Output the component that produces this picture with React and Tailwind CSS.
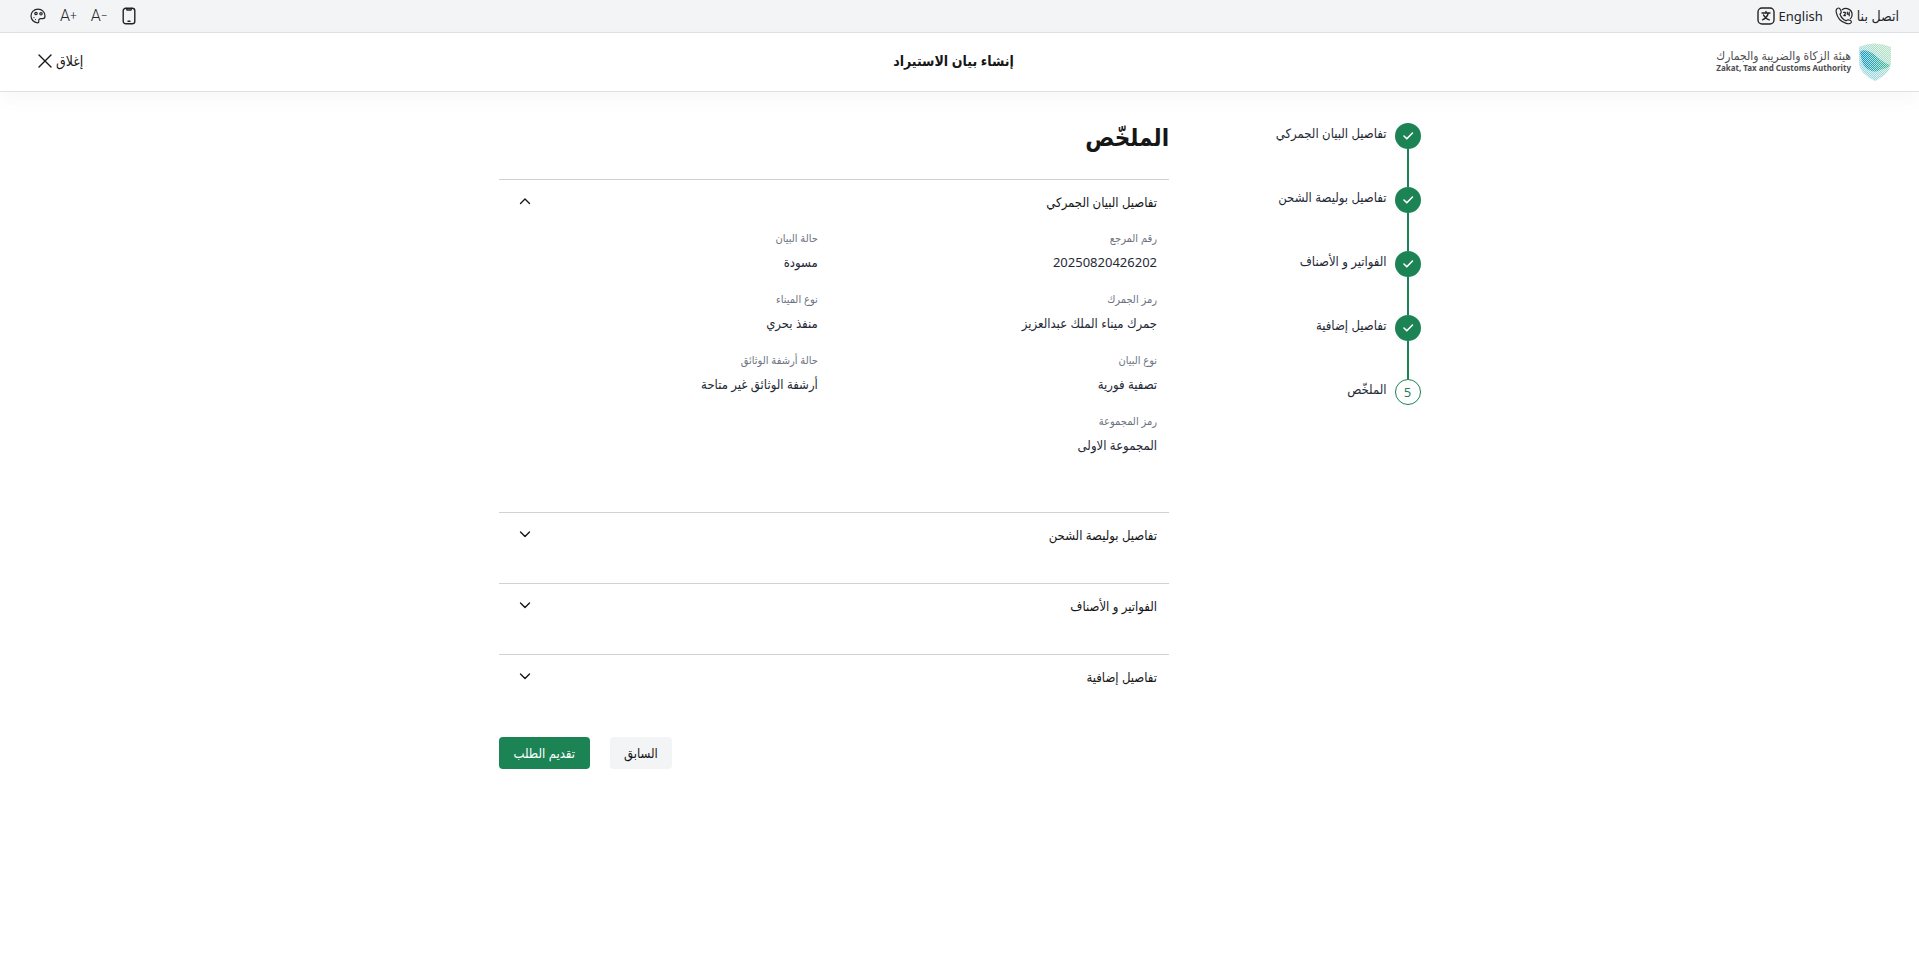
import { useState } from "react";

const steps = [
  "تفاصيل البيان الجمركي",
  "تفاصيل بوليصة الشحن",
  "الفواتير و الأصناف",
  "تفاصيل إضافية",
  "الملخّص",
];

const details = [
  { label: "رقم المرجع", value: "20250820426202" },
  { label: "حالة البيان", value: "مسودة" },
  { label: "رمز الجمرك", value: "جمرك ميناء الملك عبدالعزيز" },
  { label: "نوع الميناء", value: "منفذ بحري" },
  { label: "نوع البيان", value: "تصفية فورية" },
  { label: "حالة أرشفة الوثائق", value: "أرشفة الوثائق غير متاحة" },
  { label: "رمز المجموعة", value: "المجموعة الاولى" },
];

const stroke = {
  fill: "none",
  stroke: "currentColor",
  strokeLinecap: "round",
  strokeLinejoin: "round",
};

const PaletteIcon = () => (
  <svg viewBox="0 0 16 16" className="size-4" {...stroke} strokeWidth="1.2">
    <path d="M8 1.2C4 1.2 1 4.2 1 8s3 6.600 6.600 6.800c1 0 1.400-.8 1.200-1.600-.3-1.400.4-2.600 2-2.600h2c1.400 0 2.200-1 2.200-2.600C15 4 12 1.200 8 1.200Z" />
    <circle cx="6" cy="5.5" r="1.2" />
    <circle cx="11" cy="5.8" r="1.2" />
    <path d="M4 9.500v.1M5.500 11.500v.1" />
  </svg>
);

const PhoneIcon = () => (
  <svg viewBox="0 0 14 18" className="h-[18px] w-[14px]" {...stroke} strokeWidth="1.4">
    <rect x="1.2" y="1.2" width="11.6" height="15.6" rx="2.6" />
    <path d="M4.500 1.400l.5 1.600h4l.5-1.600M6 14.300h2" />
  </svg>
);

const TranslateIcon = () => (
  <svg viewBox="0 0 18 18" className="size-[18px]" {...stroke} strokeWidth="1.4">
    <rect x="1" y="1" width="16" height="16" rx="4" />
    <path d="M5 6h8M9 4.500V6M11.300 6c-.7 3-2.800 5.400-5.800 6.800M6.500 8c1.200 2.400 3 4 5.800 4.800" />
  </svg>
);

const CallIcon = () => (
  <svg viewBox="0 0 18 18" className="size-[18px]" {...stroke} strokeWidth="1.2">
    <path d="M3.600 1C1.600 1.200.8 3 1.200 5.200c1 5.400 4.800 9.800 10 11.200 2.600.8 5 .2 5.200-1.400.2-1.200-2.800-2.600-4-2l-1.400.8C8.200 12.600 6 10 5 7.200l1-1.200C6.800 4.600 5 .9 3.600 1Z" />
    <path d="M7.200 2.700c4-3 9.800-.2 9.900 4.700 0 1.800-.7 3.200-1.700 4.300" />
    <path d="M8.600 5.400h1.700v1.500L8.800 8.600h1.700M12.300 5.200v2h1.900M14.200 5.200v3.600" />
  </svg>
);

const ChevronIcon = ({ open }) => (
  <svg viewBox="0 0 12 8" className="h-2 w-3" {...stroke} strokeWidth="1.4">
    <path d={open ? "M1.500 5.500l4.500-4.500L10.500 5.500" : "M1.500 1L6 5.500l4.500-4.500"} />
  </svg>
);

const Shield = () => (
  <svg viewBox="0 0 32 38" className="h-[38px] w-8">
    <defs>
      <linearGradient id="shieldBase" x1="0" y1="1" x2="1" y2="0">
        <stop offset="0" stopColor="#6cc4e6" />
        <stop offset="1" stopColor="#a3d9a6" />
      </linearGradient>
      <linearGradient id="shieldBand" x1="0" y1="0" x2="1" y2="0">
        <stop offset="0" stopColor="#0f98c2" />
        <stop offset="1" stopColor="#4dba96" />
      </linearGradient>
      <pattern id="dots" width="2" height="2" patternUnits="userSpaceOnUse">
        <rect width="1" height="1" fill="#fff" opacity=".65" />
        <rect x="1" y="1" width="1" height="1" fill="#fff" opacity=".65" />
      </pattern>
    </defs>
    <path d="M0 4Q16-3 32 4v14c0 10-7 15-16 20C7 33 0 28 0 18Z" fill="url(#shieldBase)" opacity=".75" />
    <path d="M1 9C5 5 12 9 17 13c4 3 8 7 14 9-2 4-6 3-10 5-5 3-10 1-14-2C3 21 2 14 1 9Z" fill="url(#shieldBand)" />
    <path d="M0 4Q16-3 32 4v14c0 10-7 15-16 20C7 33 0 28 0 18Z" fill="url(#dots)" />
  </svg>
);

const TopBar = () => (
  <div className="flex h-[33px] items-center justify-between border-b border-[#dee2e6] bg-[#f3f4f6] px-5 text-[#212529]">
    <div className="flex items-center gap-3">
      <a href="#contact" className="flex items-center gap-1 text-sm">
        اتصل بنا
        <CallIcon />
      </a>
      <a href="#en" className="flex items-center gap-1">
        English
        <TranslateIcon />
      </a>
    </div>
    <div className="flex items-center gap-3.5 px-2.5">
      <button type="button" aria-label="عرض الجوال">
        <PhoneIcon />
      </button>
      <button type="button" dir="ltr" className="flex items-center font-[Roboto,sans-serif] font-light">
        <span className="text-base">A</span>
        <span className="text-xs">−</span>
      </button>
      <button type="button" dir="ltr" className="flex items-center font-[Roboto,sans-serif] font-light">
        <span className="text-base">A</span>
        <span className="text-xs">+</span>
      </button>
      <button type="button" aria-label="الألوان">
        <PaletteIcon />
      </button>
    </div>
  </div>
);

const Header = () => (
  <header className="grid h-[59px] grid-cols-3 items-center border-b border-[#dee2e6] bg-white px-7 shadow-[0_8px_18px_rgba(0,0,0,0.03)]">
    <div className="flex items-center gap-2">
      <Shield />
      <div className="flex flex-col text-[#4d4d4f]">
        <span className="text-xs leading-3 font-medium">هيئة الزكاة والضريبة والجمارك</span>
        <span className="text-[8px] leading-3 font-bold">Zakat, Tax and Customs Authority</span>
      </div>
    </div>
    <h1 className="pr-3 pb-0.5 text-center text-sm font-bold text-[#161616]">إنشاء بيان الاستيراد</h1>
    <button type="button" className="flex items-center gap-1 justify-self-end px-2.5 pb-0.5 text-sm text-[#161616]">
      إغلاق
      <svg viewBox="0 0 14 14" className="size-3.5" {...stroke} strokeWidth="1.4">
        <path d="M1 1l12 12M13 1L1 13" />
      </svg>
    </button>
  </header>
);

const Stepper = () => (
  <ol className="col-span-3">
    {steps.map((step, i) => {
      const last = i === steps.length - 1;
      return (
        <li key={step} className="flex gap-2">
          <div className="flex flex-col items-center">
            {last ? (
              <span className="flex size-[26px] items-center justify-center rounded-full border border-[#1b8354] text-[#1b8354]">
                {i + 1}
              </span>
            ) : (
              <>
                <span className="flex size-[26px] items-center justify-center rounded-full bg-[#1b8354] text-white">
                  <svg viewBox="0 0 12 10" className="h-2.5 w-3" {...stroke} strokeWidth="1.6">
                    <path d="M2 5l2.800 2.800 5.700-5.800" />
                  </svg>
                </span>
                <span className="h-[38px] w-0.5 bg-[#1b8354]" />
              </>
            )}
          </div>
          <span className="text-[#1f2a37]">{step}</span>
        </li>
      );
    })}
  </ol>
);

const Section = ({ title, defaultOpen = false, children }) => {
  const [open, setOpen] = useState(defaultOpen);
  return (
    <section className="border-t border-[#d2d2d4] pb-[26px]">
      <h3>
        <button
          type="button"
          aria-expanded={open}
          onClick={() => setOpen(!open)}
          className="flex h-11 w-full items-center justify-between pr-3 pl-5 font-medium text-[#161616]"
        >
          {title}
          <ChevronIcon open={open} />
        </button>
      </h3>
      {open && children}
    </section>
  );
};

const App = () => (
  <div
    dir="rtl"
    className="min-h-screen bg-white font-['Noto_Sans','DejaVu_Sans_Condensed','DejaVu_Sans',sans-serif] text-[13px] leading-5"
  >
    <TopBar />
    <Header />
    <main className="mx-auto grid max-w-[922px] grid-cols-11 pt-[31px]">
      <Stepper />
      <div className="col-span-8">
        <h2 className="pb-7 text-2xl leading-7 font-bold text-[#161616]">الملخّص</h2>
        <Section title={steps[0]} defaultOpen>
          <dl className="grid grid-cols-2 gap-x-8 px-3 pt-0.5 pb-4">
            {details.map((item) => (
              <div key={item.label} className="flex h-[61px] flex-col gap-1 pt-0.5">
                <dt className="text-[11px] text-[#6c737f]">{item.label}</dt>
                <dd className="text-[#1f2a37]">{item.value}</dd>
              </div>
            ))}
          </dl>
        </Section>
        <Section title={steps[1]} />
        <Section title={steps[2]} />
        <Section title={steps[3]} />
        <div className="flex justify-end gap-5 pt-3">
          <button type="button" className="h-8 rounded-sm bg-[#f3f4f6] px-3.5 text-[#161616]">
            السابق
          </button>
          <button type="button" className="h-8 rounded-sm bg-[#1b8354] px-[15px] text-white">
            تقديم الطلب
          </button>
        </div>
      </div>
    </main>
  </div>
);

export default App;
